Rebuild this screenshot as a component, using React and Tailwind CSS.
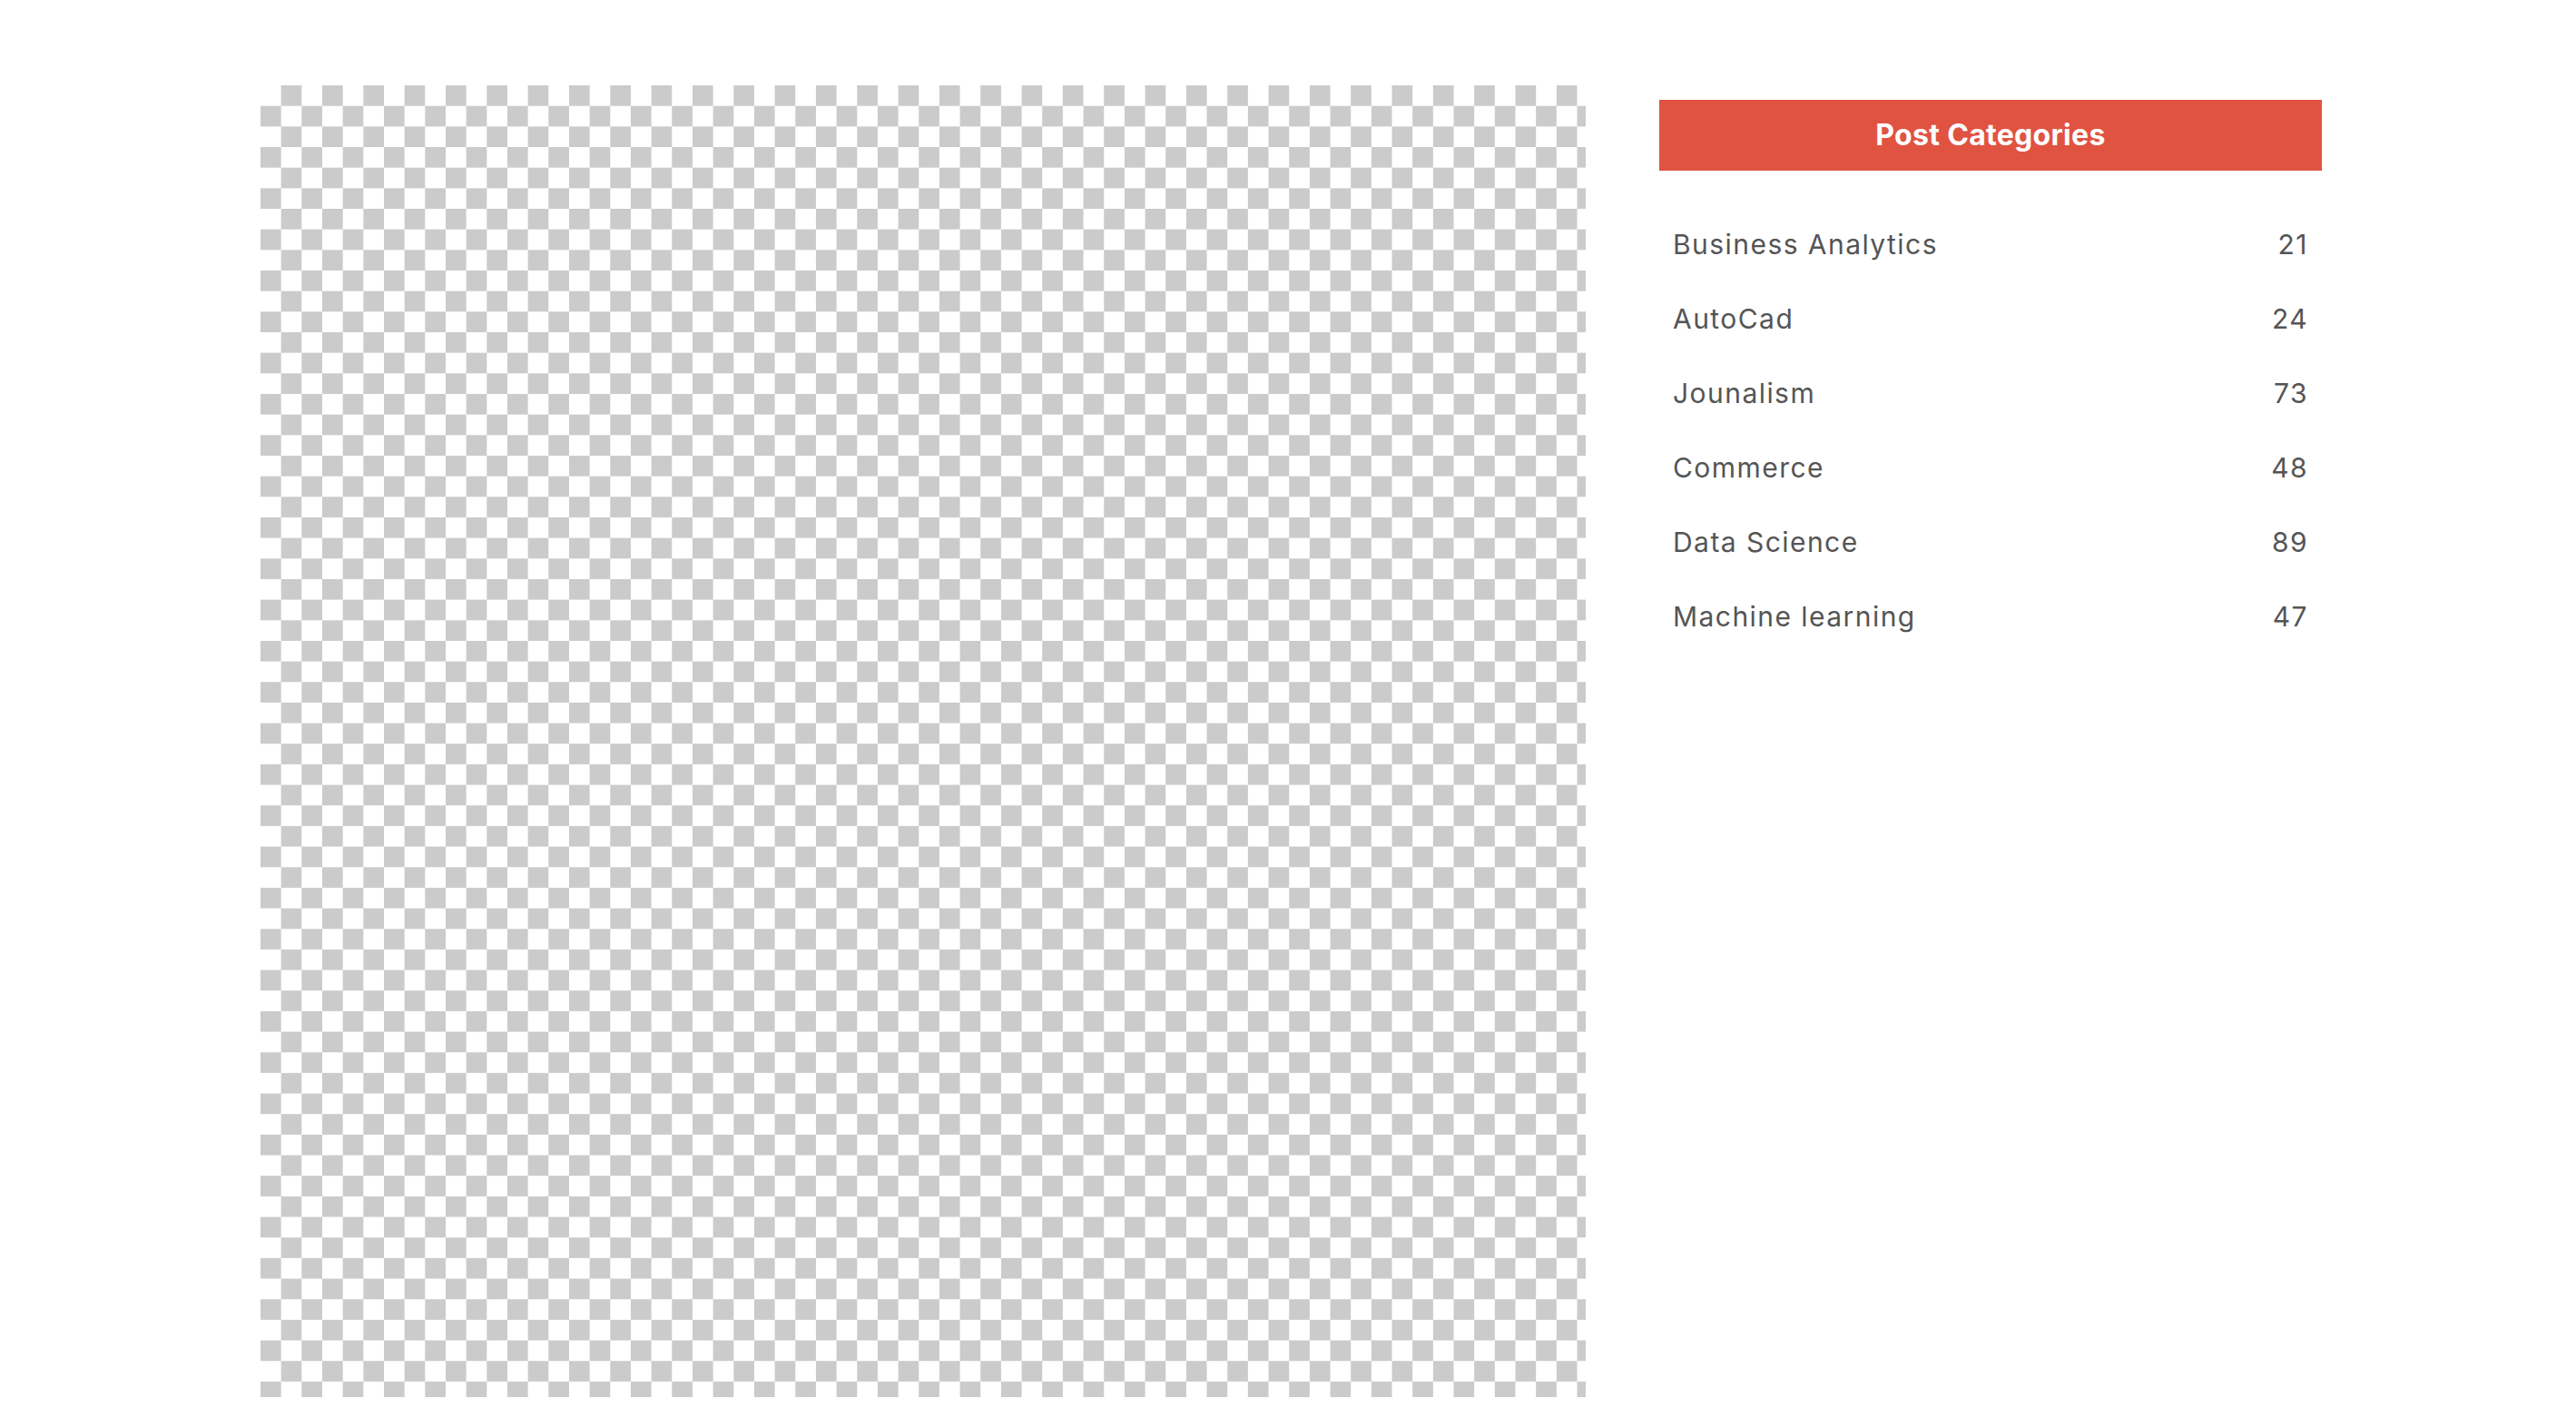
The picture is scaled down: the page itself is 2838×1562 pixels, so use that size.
export default function App() {
  // sidebar categories
  const categories = [
    { name: "Business Analytics", count: 21 },
    { name: "AutoCad", count: 24 },
    { name: "Jounalism", count: 73 },
    { name: "Commerce", count: 48 },
    { name: "Data Science", count: 89 },
    { name: "Machine learning", count: 47 },
  ];

  return (
    <div className="min-h-screen bg-white pt-[94px] pb-[23px] pl-[287px] pr-[280px] font-['Inter',sans-serif]">
      <div className="grid grid-cols-[1460px_730px] gap-x-[81px]">
        {/* transparent image placeholder */}
        <div className="h-[1445px] bg-[image:conic-gradient(#cbcbcb_25%,#ffffff_0_50%,#cbcbcb_0_75%,#ffffff_0)] bg-size-[45.33px_45.33px]" />

        <aside className="mt-[16px]">
          <h3 className="flex h-[78px] items-center justify-center bg-[#e05341] text-[32px] font-bold tracking-[0.3px] text-white">
            Post Categories
          </h3>
          <ul className="mt-[40px]">
            {categories.map((cat) => (
              <li
                key={cat.name}
                className="flex h-[82px] items-center justify-between pl-[15px] pr-[15px] text-[30px] tracking-[1.45px] text-[#555555]"
              >
                <span>{cat.name}</span>
                <span>{cat.count}</span>
              </li>
            ))}
          </ul>
        </aside>
      </div>
    </div>
  );
}
